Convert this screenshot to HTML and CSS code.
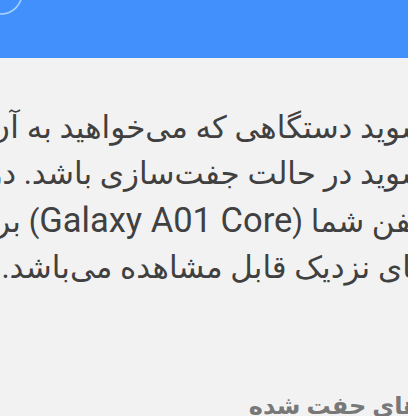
FILE: index.html
```html
<!DOCTYPE html>
<html lang="fa">
<head>
  <meta charset="UTF-8">
  <meta name="viewport" content="width=device-width, initial-scale=1.0">
  <title>بلوتوث</title>
  <link rel="stylesheet" href="styles.css">
</head>
<body>
  <header class="appbar">
    <svg class="ring" width="40" height="30" viewBox="0 0 40 30">
      <circle cx="1" cy="-7" r="21" fill="none" stroke="#a9d3ff" stroke-width="1.6"/>
    </svg>
  </header>

  <main class="content">
    <div class="desc">
      <div class="line l1">شوید دستگاهی که می‌خواهید به آن</div>
      <div class="line l2">شوید در حالت جفت‌سازی باشد. در</div>
      <div class="line l3">تلفن شما (<span class="latin">Galaxy A01 Core</span>) برای</div>
      <div class="line l4">های نزدیک قابل مشاهده می‌باشد.</div>
    </div>

    <h2 class="section">های جفت شده</h2>
  </main>
</body>
</html>
```

FILE: styles.css
```css
* {
  margin: 0;
  padding: 0;
  box-sizing: border-box;
}
html, body {
  overflow: hidden;
}
body {
  width: 408px;
  height: 416px;
  background: #f2f2f2;
  font-family: Roboto, "DejaVu Sans", sans-serif;
}
.appbar {
  position: relative;
  height: 58px;
  background: #4190fc;
}
.ring {
  position: absolute;
  top: 0;
  left: 0;
}
.content {
  padding-top: 47px;
}
.desc {
  direction: rtl;
  color: #404040;
  font-size: 31px;
  line-height: 46px;
}
.line {
  white-space: nowrap;
  text-align: right;
}
.l1, .l2 {
  margin-right: -19px;
}
.l3 {
  margin-right: -22px;
}
.l4 {
  margin-right: -20px;
}
.latin {
  font-size: 34.5px;
}
.section {
  direction: rtl;
  margin-top: 92px;
  margin-right: -12px;
  color: #787878;
  font-size: 24px;
  font-weight: 600;
  line-height: 46px;
}
```
